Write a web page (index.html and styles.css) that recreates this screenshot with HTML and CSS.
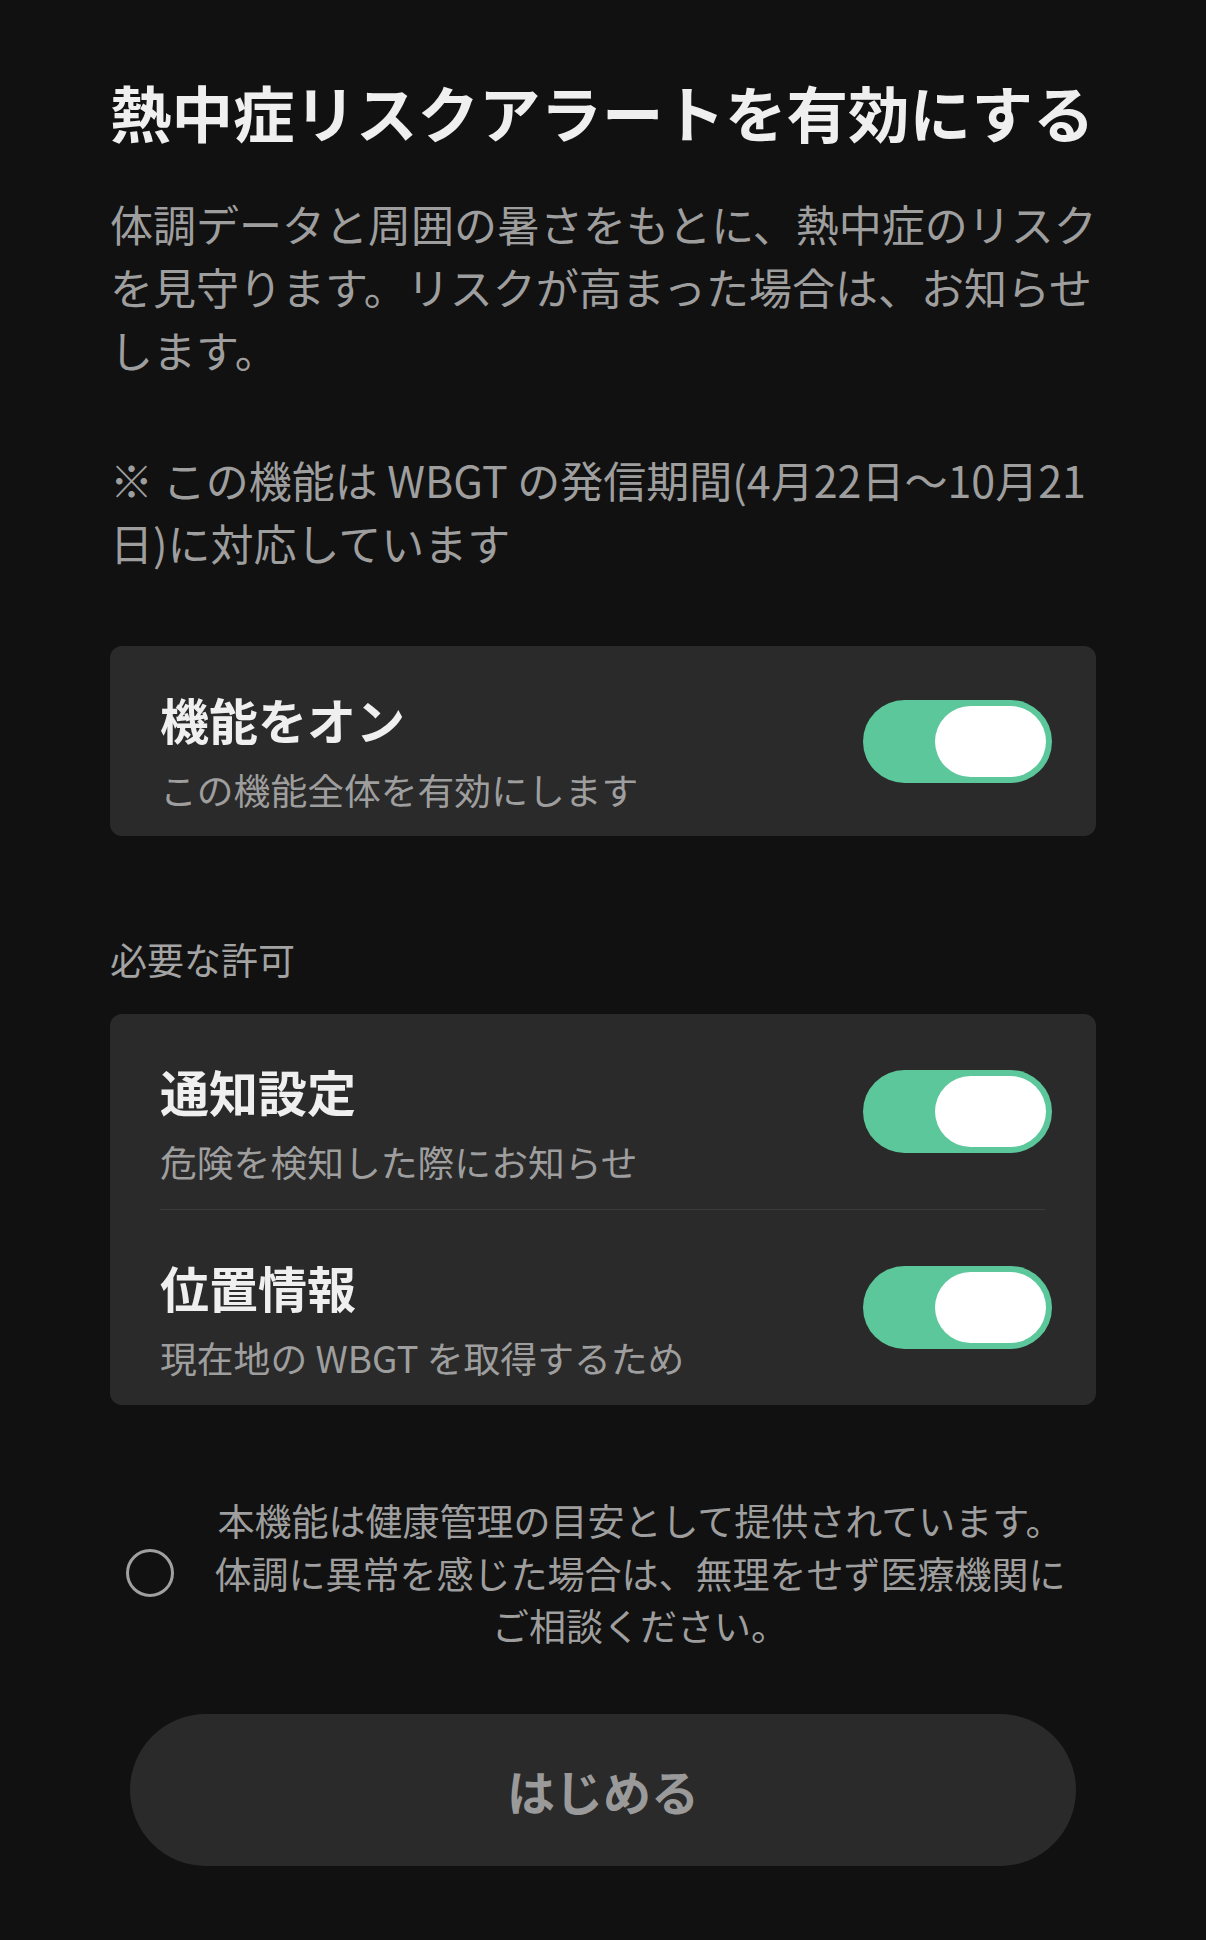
FILE: index.html
```html
<!DOCTYPE html>
<html lang="ja">
	<head>
		<meta charset="UTF-8">
		<meta name="viewport" content="width=device-width, initial-scale=1.0">
		<title>熱中症リスクアラート</title>
		<link rel="stylesheet" href="styles.css">
	</head>
	<body>
		<div id="container">
			<h1 class="titulo">熱中症リスクアラートを有効にする</h1>
			<p class="lead">体調データと周囲の暑さをもとに、熱中症のリスクを見守ります。リスクが高まった場合は、お知らせします。</p>
			<p class="lead note">※ この機能は WBGT の発信期間(4月22日〜10月21日)に対応しています</p>

			<div class="card first">
				<div class="row">
					<div class="rowtext">
						<div class="rowtitle">機能をオン</div>
						<div class="rowsub">この機能全体を有効にします</div>
					</div>
					<div class="toggle on"><span class="knob"></span></div>
				</div>
			</div>

			<div class="section">必要な許可</div>

			<div class="card list">
				<div class="row">
					<div class="rowtext">
						<div class="rowtitle">通知設定</div>
						<div class="rowsub">危険を検知した際にお知らせ</div>
					</div>
					<div class="toggle on"><span class="knob"></span></div>
				</div>
				<div class="divider"></div>
				<div class="row">
					<div class="rowtext">
						<div class="rowtitle">位置情報</div>
						<div class="rowsub">現在地の WBGT を取得するため</div>
					</div>
					<div class="toggle on"><span class="knob"></span></div>
				</div>
			</div>

			<div class="agree">
				<span class="check"></span>
				<p class="agreetext">本機能は健康管理の目安として提供されています。体調に異常を感じた場合は、無理をせず医療機関にご相談ください。</p>
			</div>

			<button class="start" type="button">はじめる</button>
		</div>
	</body>
</html>
```

FILE: styles.css
```css
:root{
	--bg-color:#111111;
	--card-color:#2a2a2a;
	--text-color:#efefef;
	--muted-color:#9e9e9e;
	--green-color:#5cc79b;
}
body{
	margin:0;
	background-color:var(--bg-color);
	font-family:"Noto Sans CJK JP", sans-serif;
	color:var(--text-color);
}
#container{
	width:986px;
	padding:69px 110px 0 110px;
	height:1871px;
}
.titulo{
	margin:0;
	font-size:61.5px;
	line-height:85px;
	font-weight:700;
	color:var(--text-color);
	white-space:nowrap;
}
.lead{
	margin:38px -20px 0 0;
	font-size:43px;
	line-height:63px;
	color:var(--muted-color);
}
.note{
	margin-top:67px;
}
.card{
	background-color:var(--card-color);
	border-radius:12px;
}
.first{
	margin-top:72px;
}
.list{
	margin-top:27px;
}
.row{
	display:flex;
	align-items:center;
	padding:39px 44px 19px 50px;
}
.list .row{
	padding-top:43px;
	padding-bottom:20px;
}
.rowtext{
	flex:1;
}
.rowtitle{
	font-size:49px;
	line-height:67px;
	font-weight:700;
	color:var(--text-color);
}
.rowsub{
	margin-top:10px;
	font-size:36.8px;
	line-height:55px;
	color:var(--muted-color);
}
.divider{
	height:1px;
	background-color:#3b3b3b;
	margin:0 51px 0 50px;
}
/* toggle sits on the middle of the row, not of its padded content */
.toggle{
	width:189px;
	height:83px;
	box-sizing:border-box;
	border-radius:42px;
	background-color:#555;
	padding:6px;
	display:flex;
	justify-content:flex-start;
	margin-bottom:20px;
}
.list .toggle{
	margin-bottom:23px;
}
.toggle.on{
	background-color:var(--green-color);
	justify-content:flex-end;
}
.knob{
	width:111px;
	height:71px;
	border-radius:36px;
	background-color:#ffffff;
}
.section{
	margin-top:96px;
	font-size:37px;
	line-height:55px;
	color:#a3a3a3;
}
.agree{
	display:flex;
	align-items:center;
	gap:26px;
	padding:0 16px;
	margin-top:89px;
}
.check{
	width:48px;
	height:48px;
	box-sizing:border-box;
	border:3px solid #a0a0a0;
	border-radius:50%;
	flex:none;
}
.agreetext{
	flex:1;
	margin:0;
	font-size:37px;
	line-height:52.5px;
	text-align:center;
	color:var(--muted-color);
}
.start{
	display:block;
	width:946px;
	height:152px;
	margin:62px auto 0 auto;
	border:none;
	border-radius:76px;
	background-color:var(--card-color);
	font-family:"Noto Sans CJK JP", sans-serif;
	font-size:48px;
	font-weight:700;
	color:#9a9a9a;
}
```
